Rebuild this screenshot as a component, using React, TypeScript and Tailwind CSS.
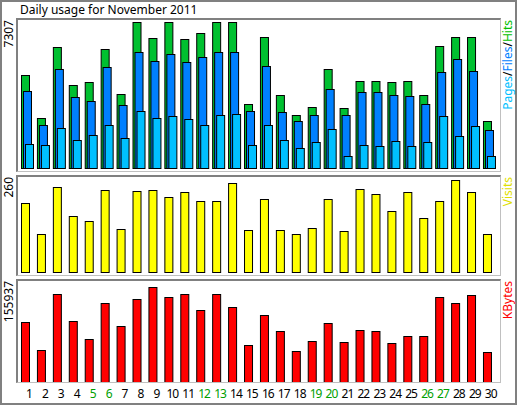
const hits = [75,118,47,85,82,49,94,22,38,22,39,33,22,22,104,37,95,115,107,69,108,81,81,82,81,95,46,37,37,121]
const files = [91,125,69,97,101,67,105,52,61,54,62,57,52,52,111,66,112,121,115,89,115,92,92,95,96,104,72,59,71,130]
const pages = [144,145,128,140,135,125,138,111,118,116,119,125,115,114,145,125,140,148,142,129,156,145,146,141,146,142,116,136,126,156]
const visits = [203,234,187,216,221,190,229,191,190,197,192,201,201,183,230,199,230,234,228,199,231,189,194,211,192,218,201,180,192,234]
const kbytes = [323,351,295,322,340,304,327,300,288,298,295,311,295,308,346,316,332,352,342,324,343,331,332,344,337,337,298,304,296,353]
const weekend = [5, 6, 12, 13, 19, 20, 26, 27]
const step = 15.93

function Bars({ tops, bottom, color, off }: { tops: number[]; bottom: number; color: string; off: number }) {
  return (
    <>
      {tops.map((t, i) => (
        <rect key={i} x={21 + i * step + off + 0.5} y={t + 0.5} width={8} height={bottom - t} fill={color} stroke="#000" strokeWidth={1} />
      ))}
    </>
  )
}

export default function App() {
  const panels = [
    { label: '7307', y0: 18, h: 154, right: <><span className="text-[#00c0ff]">Pages</span>/<span className="text-[#0080ff]">Files</span>/<span className="text-[#00c000]">Hits</span></>,
      content: <><Bars tops={hits} bottom={168} color="#00c030" off={0} /><Bars tops={files} bottom={168} color="#0080ff" off={2} /><Bars tops={pages} bottom={168} color="#00c0ff" off={4} /></> },
    { label: '260', y0: 175, h: 101, right: <span className="text-[#e0e000]">Visits</span>,
      content: <Bars tops={visits} bottom={272} color="#ffff00" off={0} /> },
    { label: '155937', y0: 280, h: 104, right: <span className="text-[#ff0000]">KBytes</span>,
      content: <Bars tops={kbytes} bottom={383} color="#ff0000" off={0} /> },
  ]
  return (
    <div className="w-[517px] h-[405px] bg-white border-2 border-[#808080] flex flex-col font-['DejaVu_Sans_Mono'] text-black">
      <div className="h-[16px] pl-[18px] text-[12px] leading-[16px] font-['DejaVu_Sans_Mono']">Daily usage for November 2011</div>
      <div className="flex flex-col gap-[3px]">
        {panels.map((p, i) => (
          <div key={i} className="flex">
            <div className="w-[14px] flex items-start justify-center pt-[2px]" style={{ height: p.h }}>
              <span className="block [writing-mode:vertical-rl] rotate-180 text-[12px] leading-none whitespace-nowrap font-['DejaVu_Sans_Mono']">{p.label}</span>
            </div>
            <div className="w-[486px] border-t-2 border-l-2 border-[#808080] border-b border-r border-b-[#c0c0c0] border-r-[#c0c0c0] overflow-hidden" style={{ height: p.h }}>
              <svg width={486} height={p.h} viewBox={`16 ${p.y0} 486 ${p.h}`} className="block -ml-[2px] -mt-[2px]">
                {p.content}
              </svg>
            </div>
            <div className="w-[14px] flex items-start justify-center pt-[2px]" style={{ height: p.h }}>
              <span className="block [writing-mode:vertical-rl] rotate-180 text-[12px] leading-none whitespace-nowrap font-['DejaVu_Sans_Mono']">{p.right}</span>
            </div>
          </div>
        ))}
      </div>
      <div className="flex pl-[19px] mt-[4px] text-[12px] leading-[14px] font-['DejaVu_Sans_Mono'] tracking-[-1px]">
        {Array.from({ length: 30 }, (_, i) => (
          <div key={i} className={`w-[15.93px] shrink-0 text-center ${weekend.includes(i + 1) ? 'text-[#00a000]' : ''}`}>{i + 1}</div>
        ))}
      </div>
    </div>
  )
}
